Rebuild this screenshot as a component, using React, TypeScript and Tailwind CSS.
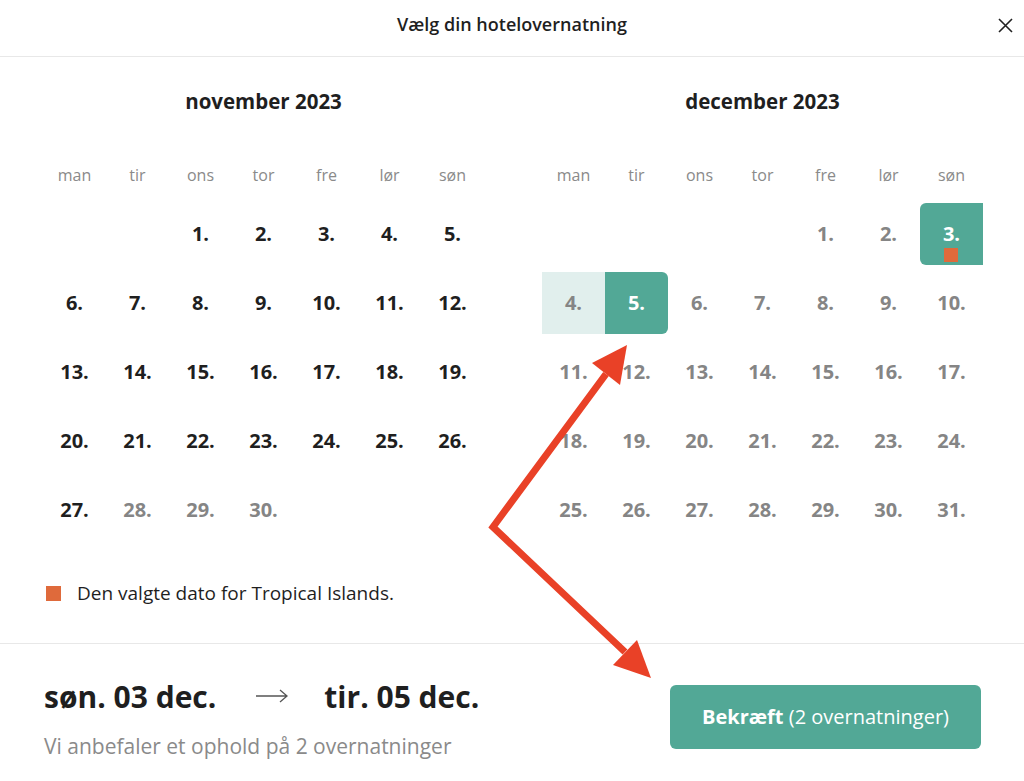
import React from 'react';

const weekdays = ['man', 'tir', 'ons', 'tor', 'fre', 'lør', 'søn'];

type Month = {
  title: string;
  offset: number;
  days: number;
};

const months: Month[] = [
  { title: 'november 2023', offset: 2, days: 30 },
  { title: 'december 2023', offset: 4, days: 31 },
];

// stay: 3. - 5. december
const dayStyle = (monthIdx: number, day: number) => {
  if (monthIdx === 1) {
    if (day === 3) return 'bg-[#52a896] text-white rounded-l-md';
    if (day === 4) return 'bg-[#e1efed] text-[#858585]';
    if (day === 5) return 'bg-[#52a896] text-white rounded-r-md';
    return 'text-[#858585]';
  }
  return day >= 28 ? 'text-[#858585]' : 'text-[#1f1f1f]';
};

const MonthGrid = ({ month, idx }: { month: Month; idx: number }) => {
  const cells: (number | null)[] = [
    ...Array.from({ length: month.offset }, () => null),
    ...Array.from({ length: month.days }, (_, i) => i + 1),
  ];

  return (
    <div className="w-[441px]">
      <h2 className="text-center text-[20.5px] leading-[24px] font-bold text-[#1f1f1f]">{month.title}</h2>
      <div className="grid grid-cols-7 mt-[52px]">
        {weekdays.map((w) => (
          <div key={w} className="text-center text-[16px] leading-[20px] text-[#8a8a8a]">
            {w}
          </div>
        ))}
      </div>
      <div className="grid grid-cols-7 gap-y-[7px] mt-[18px]">
        {cells.map((day, i) => (
          <div
            key={i}
            className={`relative h-[62px] flex items-center justify-center text-[20px] font-bold ${
              day ? dayStyle(idx, day) : ''
            }`}
          >
            {day ? `${day}.` : ''}
            {idx === 1 && day === 3 && (
              <span className="absolute left-[24px] top-[45px] w-[14px] h-[14px] bg-[#df6a3b]" />
            )}
          </div>
        ))}
      </div>
    </div>
  );
};

export default function App() {
  return (
    <div className="relative w-[1024px] h-[781px] bg-white overflow-hidden font-['Open_Sans',sans-serif] text-[#1f1f1f]">
      <header className="relative h-[57px] border-b border-[#e8e8e8] flex items-center justify-center">
        <h1 className="text-[18px] font-semibold -mt-[8px]">Vælg din hotelovernatning</h1>
        <button className="absolute right-[9px] top-[15px] w-[20px] h-[20px] flex items-center justify-center">
          <svg width="15" height="15" viewBox="0 0 15 15" fill="none" stroke="#222" strokeWidth="1.6">
            <path d="M1 1 L14 14 M14 1 L1 14" />
          </svg>
        </button>
      </header>

      <div className="flex gap-[58px] pl-[43px] pt-[32px]">
        {months.map((m, i) => (
          <MonthGrid key={m.title} month={m} idx={i} />
        ))}
      </div>

      <div className="flex items-center gap-[16px] pl-[46px] mt-[40px] h-[24px]">
        <span className="w-[15px] h-[15px] bg-[#df6a3b]" />
        <span className="text-[19px] text-[#1f1f1f]">Den valgte dato for Tropical Islands.</span>
      </div>

      <div className="border-t border-[#e8e8e8] mt-[38px] flex items-start justify-between pl-[44px] pr-[43px] pt-[35px]">
        <div>
          <div className="flex items-center h-[34px] text-[30px] font-bold">
            <span>søn. 03 dec.</span>
            <svg width="32" height="14" viewBox="0 0 32 14" fill="none" stroke="#555" strokeWidth="1.3" className="ml-[40px] mr-[36px]">
              <path d="M0 7 H31 M24 1 L31 7 L24 13" />
            </svg>
            <span>tir. 05 dec.</span>
          </div>
          <p className="mt-[20px] text-[21px] leading-[26px] text-[#8a8a8a]">Vi anbefaler et ophold på 2 overnatninger</p>
        </div>
        <button className="mt-[6px] w-[311px] h-[64px] rounded-md bg-[#52a896] text-white text-[20px]">
          <span className="font-bold">Bekræft</span> (2 overnatninger)
        </button>
      </div>

      {/* annotation arrows */}
      <svg className="absolute inset-0 pointer-events-none" width="1024" height="781">
        <polyline points="606,374 493,527 625,652" fill="none" stroke="#e94127" strokeWidth="7" strokeLinejoin="miter" />
        <polygon points="627,345 592,363 620,385" fill="#e94127" />
        <polygon points="651,678 613,665 637,640" fill="#e94127" />
      </svg>
    </div>
  );
}
